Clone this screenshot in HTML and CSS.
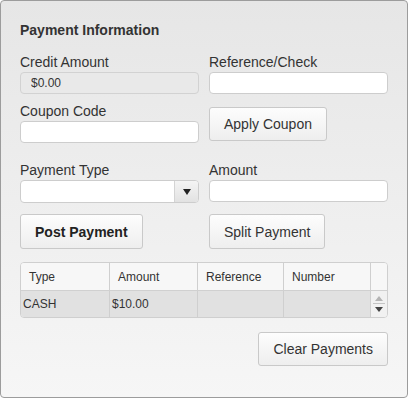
FILE: index.html
```html
<!DOCTYPE html>
<html lang="en">

<head>
    <meta charset="UTF-8" />
    <title>Payment Information</title>
    <link rel="stylesheet" href="styles.css">
</head>

<body>

    <div class="panel">
        <h3 class="panel-title">Payment Information</h3>

        <div class="row">
            <div class="field">
                <label>Credit Amount</label>
                <input type="text" class="input" value="$0.00" disabled />
            </div>
            <div class="field">
                <label>Reference/Check</label>
                <input type="text" class="input" />
            </div>
        </div>

        <div class="row row-coupon">
            <div class="field">
                <label>Coupon Code</label>
                <input type="text" class="input" />
            </div>
            <button class="btn btn-coupon">Apply Coupon</button>
        </div>

        <div class="row row-type">
            <div class="field">
                <label>Payment Type</label>
                <div class="select">
                    <span class="select-value"></span>
                    <span class="select-arrow"><i></i></span>
                </div>
            </div>
            <div class="field">
                <label>Amount</label>
                <input type="text" class="input" />
            </div>
        </div>

        <div class="row row-actions">
            <div class="field"><button class="btn btn-bold">Post Payment</button></div>
            <div class="field"><button class="btn">Split Payment</button></div>
        </div>

        <div class="grid">
            <table>
                <thead>
                    <tr>
                        <th class="col-type">Type</th>
                        <th class="col-amount">Amount</th>
                        <th class="col-ref">Reference</th>
                        <th class="col-num">Number</th>
                        <th class="col-scroll"></th>
                    </tr>
                </thead>
                <tbody>
                    <tr>
                        <td>CASH</td>
                        <td>$10.00</td>
                        <td></td>
                        <td></td>
                        <td class="scroller">
                            <span class="arrow-up"></span>
                            <span class="scroll-line"></span>
                            <span class="arrow-down"></span>
                        </td>
                    </tr>
                </tbody>
            </table>
        </div>

        <div class="row row-clear">
            <button class="btn">Clear Payments</button>
        </div>
    </div>

</body>

</html>
```

FILE: styles.css
```css
body {
    margin: 0;
    padding: 0;
    background: #ffffff;
    font-family: "Liberation Sans", Arial, sans-serif;
    color: #333;
}

.panel {
    box-sizing: border-box;
    width: 408px;
    height: 398px;
    padding: 21px 19px 0;
    border: 1px solid #9c9c9c;
    border-radius: 4px;
    background: linear-gradient(#e6e6e6, #f6f6f6);
}

.panel-title {
    margin: 0;
    font-size: 14px;
    line-height: 16px;
    font-weight: bold;
    color: #333;
}

.row {
    display: flex;
    gap: 10px;
    margin-top: 16px;
}

.row-coupon {
    margin-top: 9px;
    align-items: flex-end;
}

.row-type {
    margin-top: 19px;
}

.row-actions {
    margin-top: 11px;
}

.row-clear {
    margin-top: 14px;
    justify-content: flex-end;
}

.field {
    width: 179px;
    display: flex;
    flex-direction: column;
    align-items: flex-start;
}

.field label {
    font-size: 14px;
    line-height: 16px;
    margin-bottom: 2px;
    color: #333;
}

.input {
    box-sizing: border-box;
    width: 179px;
    height: 22px;
    padding: 0 10px;
    border: 1px solid #cdcdcd;
    border-radius: 4px;
    background: #fff;
    font-family: inherit;
    font-size: 12px;
    color: #333;
    outline: none;
}

.input:disabled {
    background: #e9e9e9;
    border-color: #d2d2d2;
    color: #333;
}

.select {
    box-sizing: border-box;
    width: 179px;
    height: 23px;
    display: flex;
    border: 1px solid #cdcdcd;
    border-radius: 4px;
    background: #fff;
    overflow: hidden;
}

.select-value {
    flex: 1;
}

.select-arrow {
    width: 23px;
    border-left: 1px solid #d4d4d4;
    background: linear-gradient(#f4f4f4, #e2e2e2);
    display: flex;
    align-items: center;
    justify-content: center;
}

.select-arrow i {
    width: 0;
    height: 0;
    border-left: 4px solid transparent;
    border-right: 4px solid transparent;
    border-top: 6px solid #222;
}

.btn {
    box-sizing: border-box;
    height: 35px;
    padding: 0 14px;
    border: 1px solid #c9c9c9;
    border-radius: 3px;
    background: linear-gradient(#fdfdfd, #eeeeee);
    font-family: inherit;
    font-size: 14px;
    color: #333;
    cursor: pointer;
}

.btn-coupon {
    height: 34px;
    margin-bottom: 2px;
}

.btn-bold {
    font-weight: bold;
    color: #222;
}

.row-clear .btn {
    height: 34px;
}

.grid {
    box-sizing: border-box;
    width: 368px;
    height: 56px;
    margin-top: 13px;
    border: 1px solid #cfcfcf;
    border-radius: 4px;
    overflow: hidden;
    background: #f7f7f7;
}

.grid table {
    width: 100%;
    border-collapse: separate;
    border-spacing: 0;
    table-layout: fixed;
    font-size: 12px;
}

.grid th,
.grid td {
    box-sizing: border-box;
    border-right: 1px solid #cfcfcf;
    text-align: left;
    white-space: nowrap;
}

.grid th {
    height: 28px;
    padding: 0 0 0 8px;
    font-weight: normal;
    background: #f7f7f7;
    border-bottom: 1px solid #d0d0d0;
}

.grid td {
    height: 26px;
    padding: 0 0 0 2px;
    background: #e1e1e1;
}

.grid .col-type { width: 89px; }
.grid .col-amount { width: 88px; }
.grid .col-ref { width: 86px; }
.grid .col-num { width: 87px; }

.grid .col-scroll,
.grid .scroller {
    border-right: none;
}

.grid .scroller {
    background: #f1f1f1;
    padding: 0;
    position: relative;
}

.arrow-up,
.arrow-down {
    position: absolute;
    left: 4px;
    width: 0;
    height: 0;
    border-left: 4px solid transparent;
    border-right: 4px solid transparent;
}

.arrow-up {
    top: 5px;
    border-bottom: 5px solid #b4b4b4;
}

.arrow-down {
    top: 16px;
    border-top: 5px solid #444;
}

.scroll-line {
    position: absolute;
    left: 2px;
    right: 2px;
    top: 12px;
    height: 1px;
    background: #c4c4c4;
}
```
